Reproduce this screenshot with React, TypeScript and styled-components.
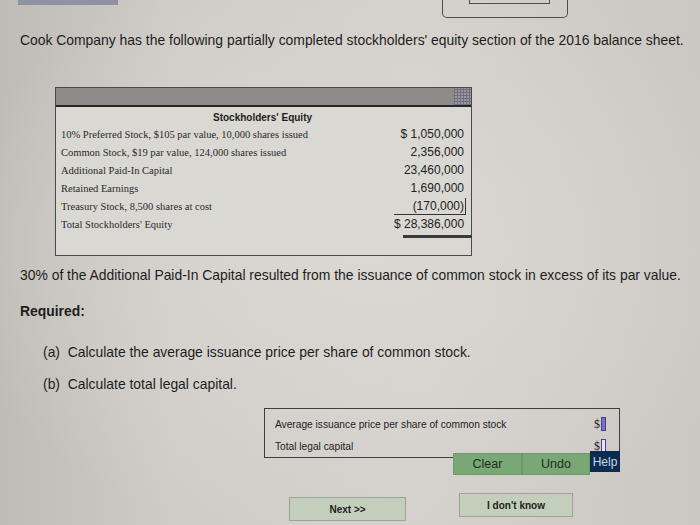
import React from "react";
import styled, { createGlobalStyle } from "styled-components";

const Global = createGlobalStyle`
  html, body { margin: 0; padding: 0; }
  body { width: 700px; height: 525px; overflow: hidden; }
`;

const Page = styled.div`
  width: 700px;
  height: 525px;
  overflow: hidden;
  background:
    radial-gradient(ellipse 420px 300px at 360px 250px, #dbd8d3 0%, rgba(219,216,211,0) 100%),
    linear-gradient(90deg, #bfbcb7 0%, #cfccc7 25%, #d4d1cc 60%, #cbc8c3 100%);
  font-family: "Liberation Sans", Arial, sans-serif;
  color: #1d1d1d;
`;

const TopStrip = styled.div`
  display: flex;
  align-items: flex-start;
  height: 20px;
`;

const TabStub = styled.div`
  margin-left: 18px;
  width: 100px;
  height: 5px;
  background: #8e92a2;
`;

const RoundBox = styled.div`
  margin-left: 324px;
  width: 124px;
  height: 17px;
  border: 1.5px solid #4e4d4b;
  border-top: none;
  border-radius: 0 0 5px 5px;
  display: flex;
  justify-content: center;
`;

const InnerBox = styled.div`
  margin-left: 8px;
  width: 79px;
  height: 3px;
  border: 1.5px solid #4e4d4b;
  border-top: none;
`;

const Para = styled.p<{ $top: number; $left?: number; $bold?: boolean }>`
  margin: ${(p) => p.$top}px 0 0 ${(p) => p.$left ?? 20}px;
  font-size: 13.9px;
  line-height: 16px;
  font-weight: ${(p) => (p.$bold ? 700 : 400)};
  white-space: nowrap;
`;

const Panel = styled.div`
  margin: 39px 0 0 55px;
  width: 417px;
  height: 169px;
  border: 1px solid #4a4a4a;
  background: #d9d8d3;
  box-sizing: border-box;
`;

const PanelHeader = styled.div`
  height: 17px;
  background: #8d8c8a;
  border-bottom: 2px solid #262626;
  display: flex;
  justify-content: flex-end;
`;

const GridPatch = styled.div`
  width: 17px;
  height: 17px;
  background:
    repeating-linear-gradient(90deg, #6f6f7a 0 1px, transparent 1px 3px),
    repeating-linear-gradient(0deg, #6f6f7a 0 1px, #9a99a0 1px 3px);
`;

const PanelTitle = styled.div`
  margin-top: 4px;
  text-align: center;
  font-size: 10px;
  font-weight: 700;
  line-height: 14px;
  padding-right: 2px;
`;

const Row = styled.div`
  display: flex;
  justify-content: space-between;
  align-items: center;
  height: 18px;
  padding: 0 5px 0 5px;
`;

const Label = styled.span`
  font-family: "Liberation Serif", "Times New Roman", serif;
  font-size: 10.5px;
  color: #2a2a2a;
  white-space: nowrap;
`;

const Amount = styled.span<{ $box?: boolean }>`
  width: 72px;
  text-align: right;
  white-space: nowrap;
  font-size: 12px;
  line-height: 16px;
  color: #222;
  box-sizing: border-box;
  border-bottom: ${(p) => (p.$box ? "1px solid #333" : "none")};
  border-right: ${(p) => (p.$box ? "1px solid #333" : "none")};
  padding-right: ${(p) => (p.$box ? "1px" : "2px")};
`;

const DoubleRule = styled.div`
  margin: 2px 0 0 347px;
  width: 69px;
  height: 3px;
  background: #3a3a3a;
`;

const AnswerBox = styled.div`
  margin: 16px 0 0 264px;
  width: 356px;
  height: 50px;
  border: 1px solid #3e3e3e;
  box-sizing: border-box;
  padding: 4px 13px 0 10px;
`;

const AnswerRow = styled.div`
  display: flex;
  justify-content: space-between;
  align-items: center;
  height: 22px;
  font-size: 10.2px;
`;

const Dollar = styled.span`
  display: flex;
  align-items: center;
  gap: 1px;
  font-family: "Liberation Serif", serif;
  font-size: 12px;
`;

const InputStub = styled.span<{ $filled?: boolean }>`
  display: inline-block;
  width: 3px;
  height: 12px;
  border: 1.5px solid #4a3d9a;
  background: ${(p) => (p.$filled ? "#7b72b8" : "#e6e4ef")};
`;

const ButtonRow = styled.div`
  display: flex;
  align-items: flex-start;
  margin: -7px 0 0 453px;
`;

const GreenButton = styled.div<{ $w: number }>`
  width: ${(p) => p.$w}px;
  height: 22px;
  margin-top: 2px;
  box-sizing: border-box;
  background: #79a876;
  border: 1px solid #6a9a68;
  display: flex;
  align-items: center;
  justify-content: center;
  font-size: 12.5px;
  color: #1f2a1f;
`;

const HelpButton = styled.div`
  width: 30px;
  height: 21px;
  background: #0d2b50;
  color: #c9d6e8;
  font-size: 12px;
  display: flex;
  align-items: center;
  justify-content: center;
`;

const NavRow = styled.div`
  display: flex;
  align-items: flex-start;
  margin: 18px 0 0 289px;
`;

const NavButton = styled.div<{ $w: number; $dy: number; $gap?: number }>`
  width: ${(p) => p.$w}px;
  height: 24px;
  margin-top: ${(p) => p.$dy}px;
  margin-left: ${(p) => p.$gap ?? 0}px;
  box-sizing: border-box;
  background: #c4cfbb;
  border: 1px solid #9da396;
  display: flex;
  align-items: center;
  justify-content: center;
  font-size: 10px;
  font-weight: 700;
  color: #222;
`;

const rows: [string, string, boolean?][] = [
  ["10% Preferred Stock, $105 par value, 10,000 shares issued", "$ 1,050,000"],
  ["Common Stock, $19 par value, 124,000 shares issued", "2,356,000"],
  ["Additional Paid-In Capital", "23,460,000"],
  ["Retained Earnings", "1,690,000"],
  ["Treasury Stock, 8,500 shares at cost", "(170,000)", true],
  ["Total Stockholders' Equity", "$ 28,386,000"],
];

export default function App() {
  return (
    <Page>
      <Global />
      <TopStrip>
        <TabStub />
        <RoundBox>
          <InnerBox />
        </RoundBox>
      </TopStrip>
      <Para $top={12}>
        Cook Company has the following partially completed stockholders' equity section of the 2016 balance sheet.
      </Para>
      <Panel>
        <PanelHeader>
          <GridPatch />
        </PanelHeader>
        <PanelTitle>Stockholders' Equity</PanelTitle>
        {rows.map(([l, v, box]) => (
          <Row key={l}>
            <Label>{l}</Label>
            <Amount $box={box}>{v}</Amount>
          </Row>
        ))}
        <DoubleRule />
      </Panel>
      <Para $top={11}>
        30% of the Additional Paid-In Capital resulted from the issuance of common stock in excess of its par value.
      </Para>
      <Para $top={20} $bold>
        Required:
      </Para>
      <Para $top={25} $left={43}>
        (a)&nbsp; Calculate the average issuance price per share of common stock.
      </Para>
      <Para $top={16} $left={43}>
        (b)&nbsp; Calculate total legal capital.
      </Para>
      <AnswerBox>
        <AnswerRow>
          <span>Average issuance price per share of common stock</span>
          <Dollar>
            $<InputStub $filled />
          </Dollar>
        </AnswerRow>
        <AnswerRow>
          <span>Total legal capital</span>
          <Dollar>
            $<InputStub />
          </Dollar>
        </AnswerRow>
      </AnswerBox>
      <ButtonRow>
        <GreenButton $w={69}>Clear</GreenButton>
        <GreenButton $w={68}>Undo</GreenButton>
        <HelpButton>Help</HelpButton>
      </ButtonRow>
      <NavRow>
        <NavButton $w={117} $dy={4}>Next &gt;&gt;</NavButton>
        <NavButton $w={114} $dy={0} $gap={53}>I don't know</NavButton>
      </NavRow>
    </Page>
  );
}
